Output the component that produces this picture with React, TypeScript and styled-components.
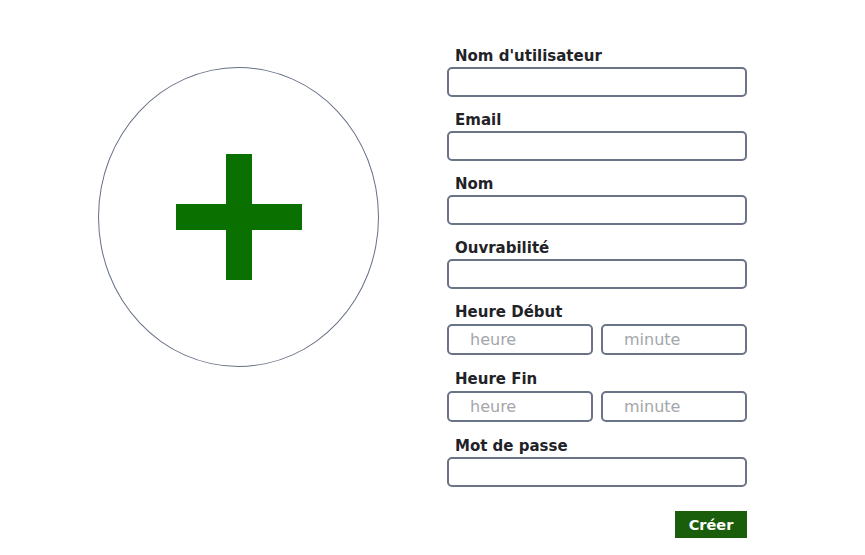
import React from 'react';
import styled, { createGlobalStyle } from 'styled-components';

const GlobalStyle = createGlobalStyle`
  body {
    margin: 0;
    background: #ffffff;
    font-family: "DejaVu Sans", "Liberation Sans", sans-serif;
  }
`;

const Page = styled.div`
  display: flex;
  align-items: flex-start;
  gap: 68px;
  padding: 47px 0 0 98px;
`;

const AvatarPicker = styled.button`
  width: 281px;
  height: 300px;
  margin-top: 20px;
  border: 1px solid #667085;
  border-radius: 50%;
  background: #ffffff;
  display: flex;
  align-items: center;
  justify-content: center;
  padding: 0;
  cursor: pointer;
`;

const Form = styled.form`
  width: 300px;
  display: flex;
  flex-direction: column;
  gap: 14px;
`;

const Field = styled.div<{ $extra?: number }>`
  display: flex;
  flex-direction: column;
  gap: 1px;
  margin-bottom: ${props => props.$extra || 0}px;
`;

const Label = styled.label`
  padding-left: 8px;
  font-size: 15px;
  line-height: 19px;
  font-weight: bold;
  color: #1f2328;
`;

const Input = styled.input<{ $height?: number }>`
  box-sizing: border-box;
  width: 100%;
  height: ${props => props.$height || 30}px;
  border: 2px solid #6b7386;
  border-radius: 5px;
  background: #ffffff;
  padding: 0 0 0 21px;
  font-family: "DejaVu Sans", "Liberation Sans", sans-serif;
  font-size: 16px;
  color: #333;
  outline: none;

  &::placeholder {
    color: #a3a6ab;
  }
`;

const TimeRow = styled.div`
  display: grid;
  grid-template-columns: 1fr 1fr;
  gap: 8px;
  margin-top: 1px;
`;

const Actions = styled.div`
  display: flex;
  justify-content: flex-end;
  margin-top: 10px;
`;

const SubmitButton = styled.button`
  width: 72px;
  height: 27px;
  border: none;
  background: #1a5e0b;
  color: #ffffff;
  font-family: "DejaVu Sans", "Liberation Sans", sans-serif;
  font-size: 14.5px;
  font-weight: bold;
  padding: 0;
  cursor: pointer;
`;

const PlusIcon = () => (
  <svg width="126" height="126" viewBox="0 0 126 126">
    <rect x="50" y="0" width="26" height="126" fill="#0a7000" />
    <rect x="0" y="50" width="126" height="26" fill="#0a7000" />
  </svg>
);

const App = () => {
  return (
    <>
      <GlobalStyle />
      <Page>
        <AvatarPicker type="button">
          <PlusIcon />
        </AvatarPicker>
        <Form onSubmit={e => e.preventDefault()}>
          <Field>
            <Label>Nom d'utilisateur</Label>
            <Input type="text" />
          </Field>
          <Field>
            <Label>Email</Label>
            <Input type="email" />
          </Field>
          <Field>
            <Label>Nom</Label>
            <Input type="text" />
          </Field>
          <Field>
            <Label>Ouvrabilité</Label>
            <Input type="text" />
          </Field>
          <Field $extra={1}>
            <Label>Heure Début</Label>
            <TimeRow>
              <Input $height={31} placeholder="heure" />
              <Input $height={31} placeholder="minute" />
            </TimeRow>
          </Field>
          <Field $extra={1}>
            <Label>Heure Fin</Label>
            <TimeRow>
              <Input $height={31} placeholder="heure" />
              <Input $height={31} placeholder="minute" />
            </TimeRow>
          </Field>
          <Field>
            <Label>Mot de passe</Label>
            <Input type="password" />
          </Field>
          <Actions>
            <SubmitButton type="submit">Créer</SubmitButton>
          </Actions>
        </Form>
      </Page>
    </>
  );
};

export default App;
